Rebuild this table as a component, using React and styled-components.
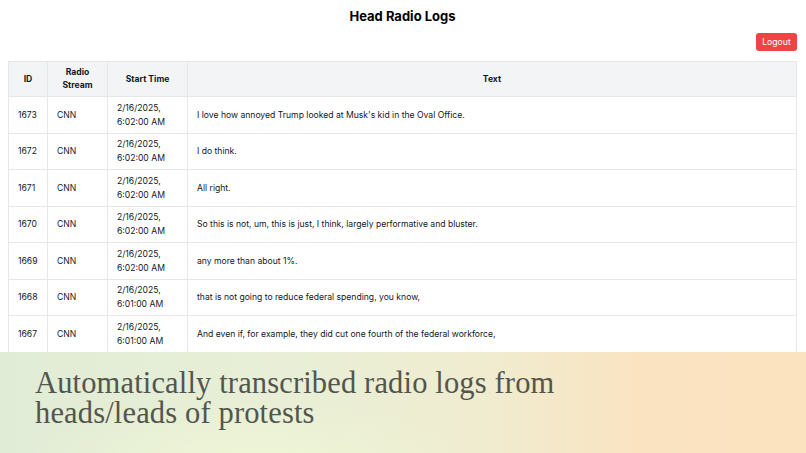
import React from 'react'
import styled, { createGlobalStyle } from 'styled-components'

const GlobalStyle = createGlobalStyle`
  html, body {
    margin: 0;
    padding: 0;
    background: #ffffff;
  }
  body {
    font-family: Inter, "Liberation Sans", Arial, sans-serif;
    color: #111827;
  }
`

const Frame = styled.div`
  width: 806px;
  height: 453px;
  display: flex;
  flex-direction: column;
  overflow: hidden;
`

const Screen = styled.div`
  flex: 1;
  min-height: 0;
  overflow: hidden;
  padding: 0 9px 0 8px;
`

const Title = styled.h1`
  margin: 0;
  padding-top: 8px;
  text-align: center;
  font-size: 13px;
  line-height: 17px;
  font-weight: 700;
  color: #000;
`

const Toolbar = styled.div`
  display: flex;
  justify-content: flex-end;
  margin-top: 8px;
  margin-bottom: 10px;
`

const LogoutButton = styled.button`
  background: #ef4444;
  color: #fff;
  border: none;
  border-radius: 3px;
  height: 18px;
  width: 41px;
  padding: 0;
  font-family: inherit;
  font-size: 8.7px;
  cursor: pointer;
`

const Table = styled.table`
  width: 100%;
  border-collapse: collapse;
  table-layout: fixed;
  font-size: 8.6px;
`

const Th = styled.th`
  box-sizing: border-box;
  background: #f3f4f6;
  border: 1px solid #e5e7eb;
  height: 35px;
  padding: 0 4px;
  font-weight: 700;
  line-height: 13px;
  text-align: center;
  width: ${p => p.w || 'auto'};
`

const Td = styled.td`
  border: 1px solid #e5e7eb;
  height: 35.5px;
  padding: 0 9px;
  line-height: 14px;
  vertical-align: middle;
`

const Caption = styled.div`
  height: 101px;
  flex-shrink: 0;
  padding: 16px 0 0 35px;
  box-sizing: border-box;
  background:
    radial-gradient(ellipse 320px 90px at 250px 110px, rgba(240, 246, 214, 0.9), rgba(240, 246, 214, 0) 70%),
    linear-gradient(90deg, #e1ecd6 0%, #e8efd6 35%, #f0ecd0 60%, #fae3c1 80%, #fce3c0 100%);
  font-family: "Liberation Serif", "Times New Roman", serif;
  font-size: 30.5px;
  line-height: 30px;
  letter-spacing: 0.15px;
  color: #53554e;
`

const rows = [
  [1673, '2/16/2025,', '6:02:00 AM', "I love how annoyed Trump looked at Musk's kid in the Oval Office."],
  [1672, '2/16/2025,', '6:02:00 AM', 'I do think.'],
  [1671, '2/16/2025,', '6:02:00 AM', 'All right.'],
  [1670, '2/16/2025,', '6:02:00 AM', 'So this is not, um, this is just, I think, largely performative and bluster.'],
  [1669, '2/16/2025,', '6:02:00 AM', 'any more than about 1%.'],
  [1668, '2/16/2025,', '6:01:00 AM', 'that is not going to reduce federal spending, you know,'],
  [1667, '2/16/2025,', '6:01:00 AM', 'And even if, for example, they did cut one fourth of the federal workforce,']
]

export default function App() {
  return (
    <Frame>
      <GlobalStyle />
      <Screen>
        <Title>Head Radio Logs</Title>
        <Toolbar>
          <LogoutButton>Logout</LogoutButton>
        </Toolbar>
        <Table>
          <thead>
            <tr>
              <Th w="39px">ID</Th>
              <Th w="60px">Radio<br />Stream</Th>
              <Th w="80px">Start Time</Th>
              <Th>Text</Th>
            </tr>
          </thead>
          <tbody>
            {rows.map(([id, date, time, text]) => (
              <tr key={id}>
                <Td>{id}</Td>
                <Td>CNN</Td>
                <Td>{date}<br />{time}</Td>
                <Td>{text}</Td>
              </tr>
            ))}
          </tbody>
        </Table>
      </Screen>
      <Caption>
        Automatically transcribed radio logs from<br />
        heads/leads of protests
      </Caption>
    </Frame>
  )
}
